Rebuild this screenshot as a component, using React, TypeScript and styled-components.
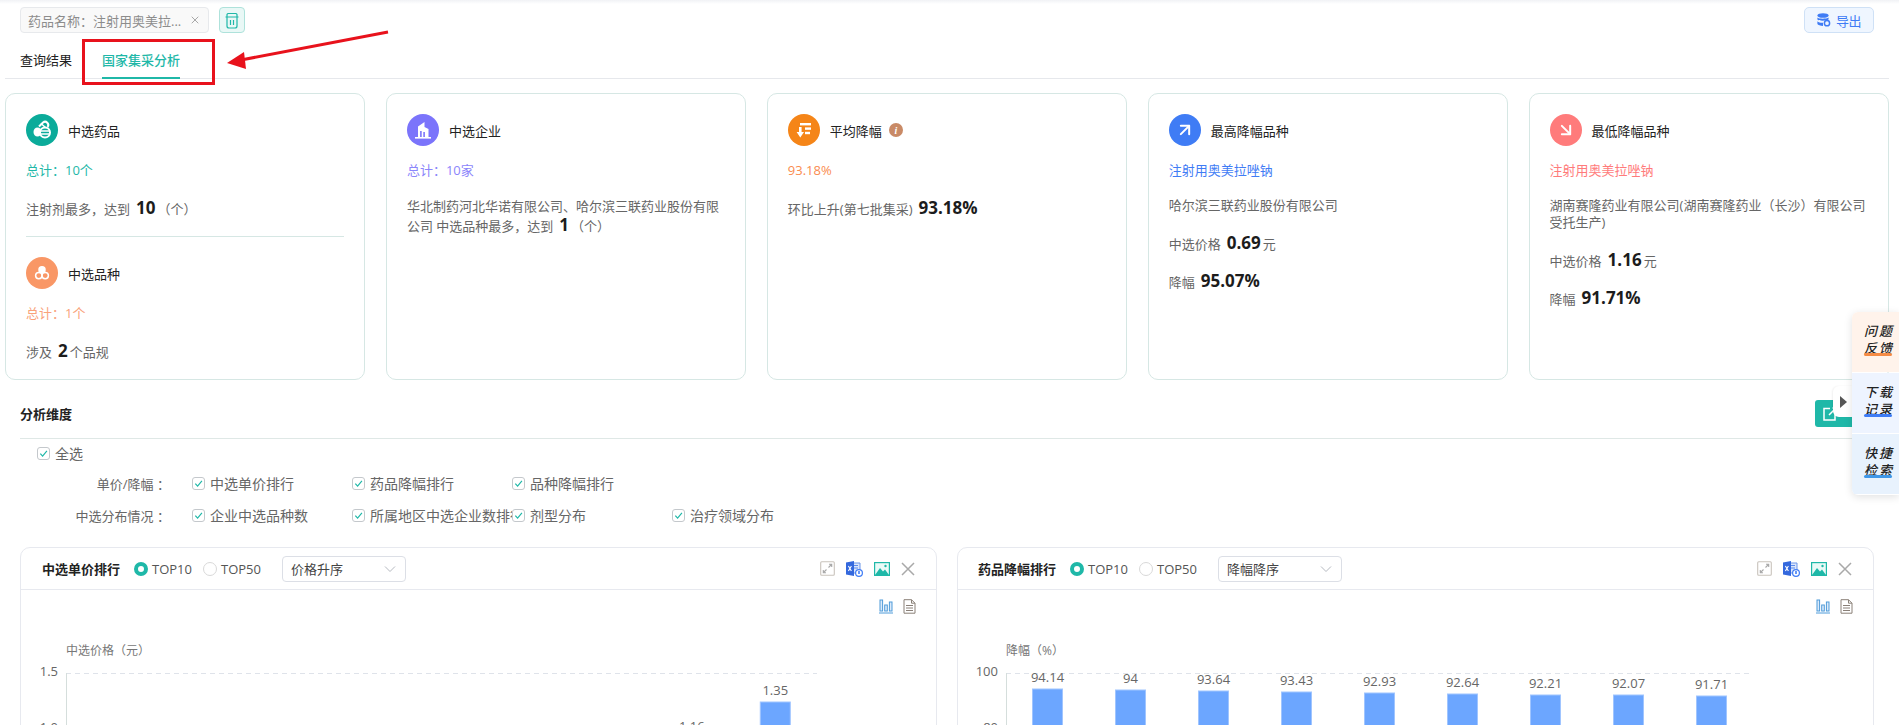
import React from "react"
import styled, { createGlobalStyle } from "styled-components"
import { ArrowDownRight, ArrowUpRight, X } from "lucide-react"

const TEAL = "#1fb8a8"
const FONT = `"Open Sans", "Noto Sans CJK SC", sans-serif`

const GlobalStyle = createGlobalStyle`
  html, body {
    margin: 0;
    height: 725px;
    overflow: hidden;
    background: #fff;
    font-family: ${FONT};
    font-size: 13px;
    color: #666;
  }
  * { box-sizing: border-box; }
`

const Page = styled.div`
  position: relative;
  width: 1899px;
  height: 725px;
  overflow: hidden;
  padding: 0 10px 0 5px;
  &:before {
    content: "";
    position: absolute;
    left: 0;
    right: 0;
    top: 0;
    height: 4px;
    background: linear-gradient(#f1f2f5, #fff);
  }
`

const TopBar = styled.div`
  display: flex;
  align-items: center;
  height: 33px;
  padding: 7px 15px 0;
`

const FilterTag = styled.div`
  display: flex;
  align-items: center;
  justify-content: space-between;
  width: 189px;
  height: 26px;
  padding: 0 7px;
  background: #f9f9f9;
  border: 1px solid #e7e9ec;
  border-radius: 4px;
  color: #8c8c8c;
  white-space: nowrap;
  svg { color: #a8a8a8; flex: none; }
`

const TrashButton = styled.button`
  display: flex;
  align-items: center;
  justify-content: center;
  width: 26px;
  height: 26px;
  margin-left: 10px;
  padding: 0;
  background: #e9f8f6;
  border: 1px solid #aee2db;
  border-radius: 4px;
`

const ExportButton = styled.button`
  display: flex;
  align-items: center;
  gap: 5px;
  width: 70px;
  height: 26px;
  margin-left: auto;
  padding: 0 0 0 12px;
  background: #eff6ff;
  border: 1px solid #cfe1f6;
  border-radius: 5px;
  color: #3f7cf5;
  font: 13px ${FONT};
  letter-spacing: -0.5px;
`

const Tabs = styled.div`
  display: flex;
  height: 46px;
  padding-left: 15px;
  gap: 30px;
  border-bottom: 1px solid #e6e8ec;
`

const Tab = styled.div<{ $active?: boolean }>`
  height: 46px;
  padding-top: 18px;
  line-height: 18px;
  font-weight: ${(p) => (p.$active ? 500 : 400)};
  color: ${(p) => (p.$active ? TEAL : "#222")};
  border-bottom: ${(p) => (p.$active ? `2px solid ${TEAL}` : "none")};
`

const Highlight = styled.div`
  position: absolute;
  left: 82px;
  top: 39px;
  width: 133px;
  height: 46px;
  border: 3px solid #e8121c;
`

const Arrow = styled.svg`
  position: absolute;
  left: 225px;
  top: 28px;
`

const Cards = styled.div`
  display: grid;
  grid-template-columns: repeat(5, 1fr);
  gap: 20.5px;
  height: 287px;
  margin-top: 14px;
`

const Card = styled.div`
  padding: 20px 20px 0;
  background: #fff;
  border: 1px solid #d6e7e4;
  border-radius: 10px;
`

const CardHead = styled.div`
  display: flex;
  align-items: center;
  gap: 10px;
  height: 32px;
  color: #222;
`

const IconDisc = styled.span<{ $bg: string }>`
  display: flex;
  align-items: center;
  justify-content: center;
  flex: none;
  width: 32px;
  height: 32px;
  border-radius: 50%;
  color: #fff;
  background: ${(p) => p.$bg};
`

const InfoDot = styled.span`
  display: inline-flex;
  align-items: center;
  justify-content: center;
  width: 14px;
  height: 14px;
  margin-left: -3px;
  border-radius: 50%;
  background: #c98a66;
  color: #fff;
  font: italic bold 10px "Liberation Serif", serif;
`

const Total = styled.div<{ $color: string }>`
  margin-top: 14px;
  line-height: 20px;
  color: ${(p) => p.$color};
`

const Line = styled.div<{ $gap?: number }>`
  margin-top: ${(p) => p.$gap ?? 19}px;
  line-height: 20px;
  color: #666;
`

const Multi = styled.div<{ $lh?: number }>`
  margin-top: ${(p) => (p.$lh ? 16 : 17)}px;
  line-height: ${(p) => p.$lh ?? 17}px;
  color: #666;
`

const Num = styled.b`
  margin: 0 2px 0 6px;
  font-size: 17px;
  font-weight: 700;
  line-height: 1;
  color: #1c1c1c;
`

const CardRule = styled.div`
  height: 1px;
  margin: 17px 0 20px;
  background: #d6e7e4;
`

const SectionHead = styled.div`
  display: flex;
  justify-content: space-between;
  height: 39px;
  margin: 20px 15px 0;
  border-bottom: 1px solid #dfe8e6;
  color: #222;
  font-weight: 600;
  line-height: 28px;
`

const ShareButton = styled.button`
  display: flex;
  align-items: center;
  width: 59px;
  height: 27px;
  padding: 0 0 0 7px;
  background: ${TEAL};
  border: none;
  border-radius: 3px;
`

const Options = styled.div`
  margin: 0 15px;
  height: 109px;
`

const AllRow = styled.div`
  display: flex;
  align-items: center;
  height: 30px;
  margin-top: -1px;
  padding-left: 17px;
  font-size: 14px;
`

const OptionRow = styled.div`
  display: flex;
  align-items: center;
  height: 30px;
  margin-bottom: 2px;
`

const RowLabel = styled.div`
  width: 150px;
  margin-right: 22px;
  text-align: right;
  white-space: pre;
`

const Option = styled.label`
  display: flex;
  align-items: center;
  width: 160px;
  overflow: hidden;
  white-space: nowrap;
  font-size: 14px;
`

const CheckMark = styled.span`
  display: inline-flex;
  align-items: center;
  justify-content: center;
  flex: none;
  width: 13px;
  height: 13px;
  margin-right: 5px;
  border: 1px solid #c4c8cc;
  border-radius: 3px;
`

const Panels = styled.div`
  display: grid;
  grid-template-columns: 917px 917px;
  gap: 20px;
  margin: 0 15px;
`

const Panel = styled.div`
  height: 400px;
  border: 1px solid #e7e9ef;
  border-radius: 10px 10px 0 0;
`

const PanelHead = styled.div`
  display: flex;
  align-items: center;
  height: 42px;
  padding: 0 21px 0 0;
  border-bottom: 1px solid #e7e9ef;
`

const PanelTitle = styled.div<{ $left: number }>`
  width: ${(p) => p.$left}px;
  padding-left: ${(p) => (p.$left > 112 ? 21 : 20)}px;
  flex: none;
  color: #222;
  font-weight: 600;
  white-space: nowrap;
`

const RadioItem = styled.label`
  display: flex;
  align-items: center;
  width: 69px;
  color: #555;
`

const RadioDot = styled.span<{ $on?: boolean }>`
  width: 14px;
  height: 14px;
  margin-right: 4px;
  border-radius: 50%;
  background: #fff;
  border: ${(p) => (p.$on ? `4px solid ${TEAL}` : "1px solid #d9d9d9")};
`

const SortSelect = styled.div`
  display: flex;
  align-items: center;
  justify-content: space-between;
  width: 124px;
  height: 26px;
  margin-left: 10px;
  padding: 0 9px 0 8px;
  border: 1px solid #dcdfe6;
  border-radius: 4px;
  color: #444;
`

const PanelTools = styled.div`
  display: flex;
  align-items: center;
  gap: 11px;
  margin-left: auto;
`

const SubTools = styled.div`
  display: flex;
  justify-content: flex-end;
  gap: 10px;
  height: 50px;
  padding: 9px 20px 0 0;
`

const ChartSvg = styled.svg`
  display: block;
  font-family: ${FONT};
  overflow: hidden;
`

const SideDock = styled.div`
  position: absolute;
  right: 0;
  top: 312px;
  width: 47px;
  border-radius: 6px 0 0 6px;
  overflow: hidden;
  box-shadow: 0 2px 8px rgba(0, 0, 0, 0.12);
`

const DockItem = styled.div<{ $bg: string; $bar: string }>`
  position: relative;
  height: 60px;
  padding: 11px 0 0 12px;
  background: ${(p) => p.$bg};
  margin-bottom: 1px;
  color: #222;
  font-size: 13px;
  font-weight: 500;
  font-style: italic;
  line-height: 17px;
  letter-spacing: 2px;
  &:after {
    content: "";
    position: absolute;
    left: 12px;
    top: 41px;
    width: 28px;
    height: 3px;
    border-radius: 2px;
    background: ${(p) => p.$bar};
  }
`

const DockToggle = styled.div`
  position: absolute;
  left: 1833px;
  top: 386px;
  display: flex;
  align-items: center;
  justify-content: center;
  width: 20px;
  height: 31px;
  background: #fff;
  border-radius: 6px 0 0 6px;
  box-shadow: -1px 0 2px rgba(0, 0, 0, 0.06);
  &:after {
    content: "";
    border-left: 7px solid #555;
    border-top: 6px solid transparent;
    border-bottom: 6px solid transparent;
  }
`

const Checked = ({ children }: { children: React.ReactNode }) => (
  <>
    <CheckMark>
      <svg width="9" height="9" viewBox="0 0 10 10" fill="none" stroke={TEAL} strokeWidth="1.3">
        <path d="M1.5 5.2 4 8 8.8 2" />
      </svg>
    </CheckMark>
    {children}
  </>
)

const PillIcon = () => (
  <svg width="24" height="24" viewBox="0 0 24 24" fill="none" stroke="#fff" strokeWidth="2">
    <path d="M9 8.5 13 4.500a3.200 3.200 0 0 1 4.500 4.500" />
    <path d="M11 5.500 16 10" strokeWidth="1.4" />
    <ellipse cx="7.500" cy="14" rx="3" ry="3.600" fill="#fff" />
    <circle cx="15" cy="14.500" r="5" fill="#0bab9a" />
    <path d="M11 13h8M11 16h8" strokeWidth="1.600" />
  </svg>
)

const BuildingIcon = () => (
  <svg width="20" height="20" viewBox="0 0 20 20" fill="#fff">
    <path d="M5 18V6.500L11.500 2v5l4 2v9h-3.600v-6h-1.600v6h-1.600v-7H7.100v7z" />
    <rect x="2" y="17" width="16" height="1.600" />
  </svg>
)

const SortIcon = () => (
  <svg width="20" height="20" viewBox="0 0 20 20" fill="#fff">
    <rect x="6" y="3" width="11" height="2.400" />
    <rect x="11" y="7.400" width="6" height="2.400" />
    <rect x="11" y="11.800" width="5" height="2.400" />
    <path d="M5 7h2.600v5H10l-3.700 5.400L2.600 12H5z" />
  </svg>
)

const TrioIcon = () => (
  <svg width="20" height="20" viewBox="0 0 20 20" fill="none" stroke="#fff" strokeWidth="1.500">
    <circle cx="10" cy="6.800" r="3" fill="#fff" />
    <circle cx="6.800" cy="12.600" r="3.200" />
    <circle cx="13.200" cy="12.600" r="3.200" />
  </svg>
)

const TrashIcon = () => (
  <svg width="16" height="17" viewBox="0 0 16 17" fill="none" stroke={TEAL} strokeWidth="1.200">
    <path d="M3 2.500a1.500 1.500 0 0 1 1.500-1h7a1.500 1.500 0 0 1 1.500 1V5H3zM1.500 5h13M3 5v9a2 2 0 0 0 2 2h6a2 2 0 0 0 2-2V5M6.500 8v5M9.500 8v5" />
  </svg>
)

const DbIcon = () => (
  <svg width="14" height="14" viewBox="0 0 14 14" fill="#3f7cf5">
    <ellipse cx="6" cy="2.500" rx="5.600" ry="2.300" />
    <path d="M.4 4.500c1 1.600 9.200 1.600 11.200 0v2c-2 1.600-10.200 1.600-11.200 0zM.4 8.200c1 1.400 4 1.600 5.600 1.500v3.200c-2.600 0-5-.6-5.600-1.800z" />
    <circle cx="10" cy="10.200" r="2.600" fill="none" stroke="#3f7cf5" strokeWidth="1.500" />
  </svg>
)

const ExpandIcon = () => (
  <svg width="15" height="15" viewBox="0 0 15 15" fill="none" stroke="#a9a9a9" strokeWidth="1.100">
    <rect x="0.700" y="0.700" width="13.600" height="13.600" rx="1" stroke="#c9c3bc" />
    <path d="M8.500 6.500 11.500 3.500M9 3.300h2.700V6M6.500 8.500l-3 3M3.300 9v2.700H6" />
  </svg>
)

const ExcelIcon = () => (
  <svg width="17" height="16" viewBox="0 0 17 16">
    <path d="M6 2h8v10H6z" fill="#dbe6fb" stroke="#6d95e8" />
    <path d="M8 4.500h4M8 7h4" stroke="#5b8aec" />
    <path d="M0 1.600 8 0v15l-8-1.600z" fill="#3468dd" />
    <path d="M2.400 5l3 5M5.400 5l-3 5" stroke="#fff" strokeWidth="1.100" />
    <circle cx="13" cy="12" r="3.400" fill="#fff" stroke="#3f7cf5" strokeWidth="1.200" />
    <path d="M13 10v3" stroke="#3f7cf5" strokeWidth="1.600" />
  </svg>
)

const ImageIcon = () => (
  <svg width="16" height="14" viewBox="0 0 16 14">
    <rect x="0.600" y="0.600" width="14.800" height="12.800" fill="#eafaf7" stroke="#1fb8a8" strokeWidth="1.200" />
    <path d="M1 13 6 6l3 3.500 2-2 4 5.500z" fill="#1fb8a8" />
    <circle cx="11.500" cy="4" r="1.200" fill="#1fb8a8" />
  </svg>
)

const CloseIcon = () => (
  <svg width="14" height="14" viewBox="0 0 14 14" fill="none" stroke="#a9a9a9" strokeWidth="1.500">
    <path d="M1 1l12 12M13 1 1 13" />
  </svg>
)

const BarsIcon = () => (
  <svg width="14" height="15" viewBox="0 0 14 15" fill="#dceafa" stroke="#4f9bd9" strokeWidth="1">
    <rect x="1" y="1" width="2.600" height="11" />
    <rect x="5.700" y="6" width="2.600" height="6" />
    <rect x="10.400" y="3" width="2.600" height="9" />
    <path d="M0 14h14" />
  </svg>
)

const DocIcon = () => (
  <svg width="13" height="15" viewBox="0 0 13 15" fill="#fff" stroke="#8a8078" strokeWidth="1">
    <path d="M1 .7h7.500l3.500 3.500v10H1z" />
    <path d="M8.500.7v3.500H12M3 6.500h7M3 9h7M3 11.500h7" fill="none" />
  </svg>
)

type ChartProps = {
  width: number
  axisLeft: number
  axisRight: number
  title: string
  ticks: { text: string; y: number }[]
  bars: { label: string; top: number }[]
}

const BarChart = ({ width, axisLeft, axisRight, title, ticks, bars }: ChartProps) => {
  const band = (axisRight - axisLeft) / bars.length
  return (
    <ChartSvg width={width} height={100}>
      <text x={axisLeft} y={15} fontSize="12" fill="#777">
        {title}
      </text>
      {ticks.map((t) => (
        <text key={t.text} x={axisLeft - 8} y={t.y + 3} fontSize="13" fill="#666" textAnchor="end">
          {t.text}
        </text>
      ))}
      <line x1={axisLeft} x2={axisRight} y1={33.5} y2={33.5} stroke="#dfe3ea" strokeDasharray="5 4" />
      <line x1={axisLeft + 0.5} x2={axisLeft + 0.5} y1={33} y2={100} stroke="#d5dedc" />
      {bars.map((b, i) => {
        const cx = axisLeft + band * (i + 0.5)
        return (
          <g key={i}>
            <rect x={cx - 15} y={b.top} width={30} height={100} fill="#6ca6ff" stroke="#a0c5ff" />
            <text x={cx} y={b.top - 7} fontSize="13" fill="#666" textAnchor="middle">
              {b.label}
            </text>
          </g>
        )
      })}
    </ChartSvg>
  )
}

const PanelHeader = ({ title, left, select }: { title: string; left: number; select: string }) => (
  <PanelHead>
    <PanelTitle $left={left}>{title}</PanelTitle>
    <RadioItem>
      <RadioDot $on />
      TOP10
    </RadioItem>
    <RadioItem>
      <RadioDot />
      TOP50
    </RadioItem>
    <SortSelect>
      {select}
      <svg width="12" height="8" viewBox="0 0 12 8" fill="none" stroke="#b5b9c0">
        <path d="M1 1.500 6 6.500 11 1.500" />
      </svg>
    </SortSelect>
    <PanelTools>
      <ExpandIcon />
      <ExcelIcon />
      <ImageIcon />
      <CloseIcon />
    </PanelTools>
  </PanelHead>
)

const priceBars = [
  { label: "0.69", top: 188 },
  { label: "0.72", top: 183 },
  { label: "0.78", top: 172 },
  { label: "0.85", top: 158 },
  { label: "0.91", top: 147 },
  { label: "0.96", top: 137 },
  { label: "1.05", top: 120 },
  { label: "1.16", top: 98 },
  { label: "1.35", top: 62 },
]

const cutBars = [
  { label: "94.14", top: 49 },
  { label: "94", top: 50 },
  { label: "93.64", top: 51 },
  { label: "93.43", top: 52 },
  { label: "92.93", top: 53 },
  { label: "92.64", top: 54 },
  { label: "92.21", top: 55 },
  { label: "92.07", top: 55 },
  { label: "91.71", top: 56 },
]

export default function App() {
  return (
    <Page>
      <GlobalStyle />
      <TopBar>
        <FilterTag>
          药品名称：注射用奥美拉...
          <X size={12} />
        </FilterTag>
        <TrashButton>
          <TrashIcon />
        </TrashButton>
        <ExportButton>
          <DbIcon />
          导出
        </ExportButton>
      </TopBar>
      <Tabs>
        <Tab>查询结果</Tab>
        <Tab $active>国家集采分析</Tab>
      </Tabs>
      <Highlight />
      <Arrow width="170" height="50" viewBox="0 0 170 50">
        <path d="M163 4 16 32" stroke="#e8121c" strokeWidth="3" />
        <path d="M2 35 19 24 21 41z" fill="#e8121c" />
      </Arrow>

      <Cards>
        <Card>
          <CardHead>
            <IconDisc $bg="#0bab9a">
              <PillIcon />
            </IconDisc>
            中选药品
          </CardHead>
          <Total $color={TEAL}>总计：10个</Total>
          <Line>
            注射剂最多，达到<Num>10</Num>（个）
          </Line>
          <CardRule />
          <CardHead>
            <IconDisc $bg="#f99766">
              <TrioIcon />
            </IconDisc>
            中选品种
          </CardHead>
          <Total $color="#f9a27a">总计：1个</Total>
          <Line>
            涉及<Num>2</Num>个品规
          </Line>
        </Card>
        <Card>
          <CardHead>
            <IconDisc $bg="#7b74fb">
              <BuildingIcon />
            </IconDisc>
            中选企业
          </CardHead>
          <Total $color="#8b85fb">总计：10家</Total>
          <Multi $lh={20}>
            华北制药河北华诺有限公司、哈尔滨三联药业股份有限公司 中选品种最多，达到<Num>1</Num>（个）
          </Multi>
        </Card>
        <Card>
          <CardHead>
            <IconDisc $bg="#f58518">
              <SortIcon />
            </IconDisc>
            平均降幅
            <InfoDot>i</InfoDot>
          </CardHead>
          <Total $color="#fa8c4f">93.18%</Total>
          <Line>
            环比上升(第七批集采)<Num>93.18%</Num>
          </Line>
        </Card>
        <Card>
          <CardHead>
            <IconDisc $bg="#3f7cf5">
              <ArrowUpRight size={20} strokeWidth={2.4} />
            </IconDisc>
            最高降幅品种
          </CardHead>
          <Total $color="#3f7cf5">注射用奥美拉唑钠</Total>
          <Multi>哈尔滨三联药业股份有限公司</Multi>
          <Line $gap={20}>
            中选价格<Num>0.69</Num>元
          </Line>
          <Line $gap={18}>
            降幅<Num>95.07%</Num>
          </Line>
        </Card>
        <Card>
          <CardHead>
            <IconDisc $bg="#ff7b7b">
              <ArrowDownRight size={20} strokeWidth={2.4} />
            </IconDisc>
            最低降幅品种
          </CardHead>
          <Total $color="#ff7b7b">注射用奥美拉唑钠</Total>
          <Multi>湖南赛隆药业有限公司(湖南赛隆药业（长沙）有限公司受托生产)</Multi>
          <Line $gap={20}>
            中选价格<Num>1.16</Num>元
          </Line>
          <Line $gap={18}>
            降幅<Num>91.71%</Num>
          </Line>
        </Card>
      </Cards>

      <SectionHead>
        分析维度
        <ShareButton>
          <svg width="16" height="16" viewBox="0 0 16 16" fill="none" stroke="#fff" strokeWidth="1.500">
            <path d="M8 2.500H2v11.500h11V8M7 9l7-7M10.500 2H14v3.500" />
          </svg>
        </ShareButton>
      </SectionHead>
      <Options>
        <AllRow>
          <Checked>全选</Checked>
        </AllRow>
        <OptionRow>
          <RowLabel>单价/降幅 ：</RowLabel>
          <Option>
            <Checked>中选单价排行</Checked>
          </Option>
          <Option>
            <Checked>药品降幅排行</Checked>
          </Option>
          <Option>
            <Checked>品种降幅排行</Checked>
          </Option>
        </OptionRow>
        <OptionRow>
          <RowLabel>中选分布情况 ：</RowLabel>
          <Option>
            <Checked>企业中选品种数</Checked>
          </Option>
          <Option>
            <Checked>所属地区中选企业数排行</Checked>
          </Option>
          <Option>
            <Checked>剂型分布</Checked>
          </Option>
          <Option>
            <Checked>治疗领域分布</Checked>
          </Option>
        </OptionRow>
      </Options>

      <Panels>
        <Panel>
          <PanelHeader title="中选单价排行" left={113} select="价格升序" />
          <SubTools>
            <BarsIcon />
            <DocIcon />
          </SubTools>
          <BarChart
            width={915}
            axisLeft={45}
            axisRight={796}
            title="中选价格（元）"
            ticks={[
              { text: "1.5", y: 33 },
              { text: "1.0", y: 89 },
            ]}
            bars={priceBars}
          />
        </Panel>
        <Panel>
          <PanelHeader title="药品降幅排行" left={112} select="降幅降序" />
          <SubTools>
            <BarsIcon />
            <DocIcon />
          </SubTools>
          <BarChart
            width={915}
            axisLeft={48}
            axisRight={795}
            title="降幅（%）"
            ticks={[
              { text: "100", y: 33 },
              { text: "80", y: 89 },
            ]}
            bars={cutBars}
          />
        </Panel>
      </Panels>

      <DockToggle />
      <SideDock>
        <DockItem $bg="#fff3eb" $bar="#f58b45">
          问题
          <br />
          反馈
        </DockItem>
        <DockItem $bg="#eef4ff" $bar="#3f7cf5">
          下载
          <br />
          记录
        </DockItem>
        <DockItem $bg="#e8f2fd" $bar="#3f97e8">
          快捷
          <br />
          检索
        </DockItem>
      </SideDock>
    </Page>
  )
}
